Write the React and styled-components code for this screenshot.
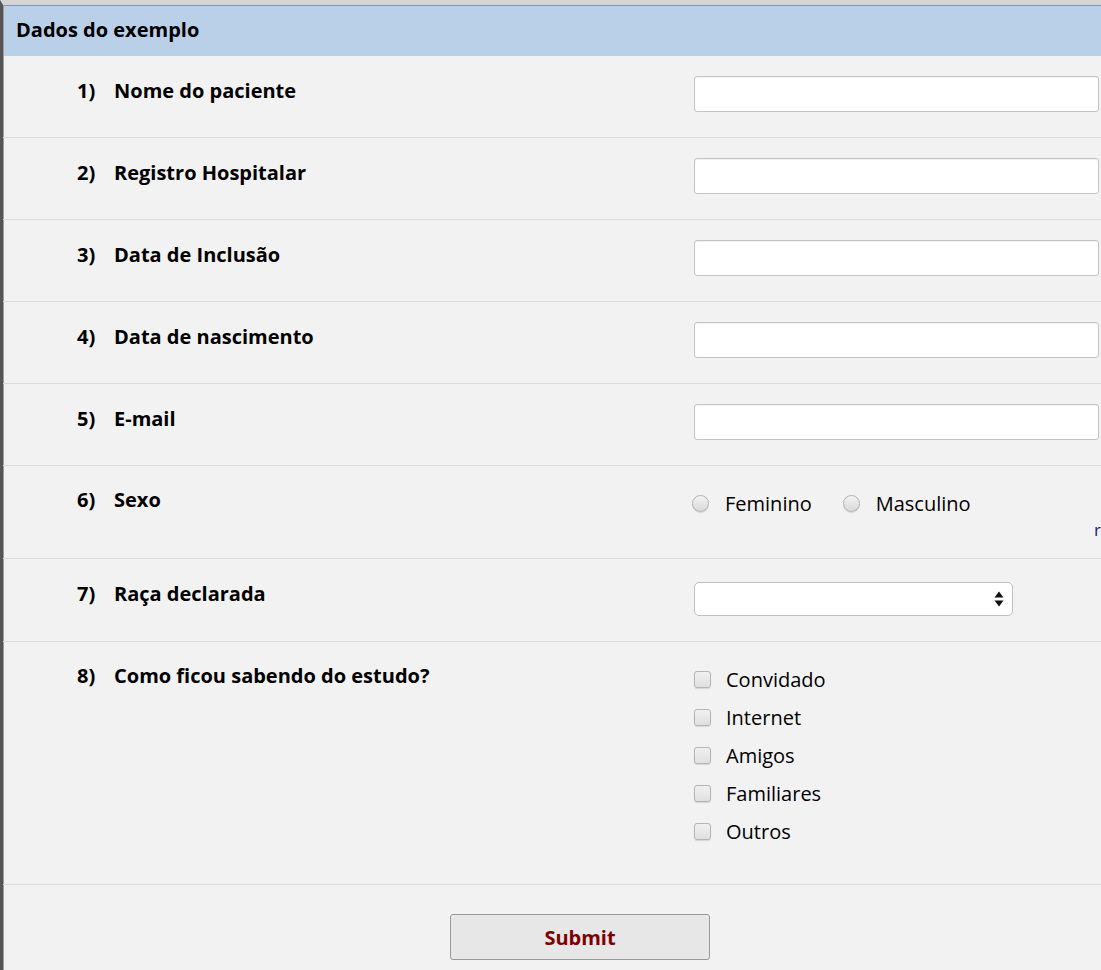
import React from 'react';
import styled, {createGlobalStyle} from 'styled-components';

const GlobalStyle = createGlobalStyle`
  html, body {
    margin: 0;
    padding: 0;
    overflow: hidden;
    background: #f2f2f2;
  }
  body {
    font-family: "Open Sans", "DejaVu Sans", sans-serif;
    color: #000;
  }
`;

const Frame = styled.div`
  width: 1150px;
  min-height: 970px;
  border-left: 3px solid #555;
  border-top: 5px solid #d4d4d4;
  background: #f2f2f2;
  box-shadow: inset 1px 0 0 #9a9a9a;
`;

const Header = styled.div`
  background: #bacfe8;
  border-top: 1px solid #7d97b8;
  height: 51px;
  box-sizing: border-box;
  padding: 0 0 3px 12px;
  display: flex;
  align-items: center;
  font-weight: 700;
  font-size: 20px;
  margin-left: 1px;
`;

const Row = styled.div`
  display: grid;
  grid-template-columns: 74px 37px 580px 1fr;
  border-bottom: 1px solid #dcdcdc;
  padding: ${p => p.$pad || '20px 0 25px'};
  min-height: ${p => p.$min || '36px'};
`;

const Num = styled.div`
  grid-column: 2;
  font-weight: 700;
  font-size: 20px;
  line-height: 24px;
  padding-top: ${p => p.$top || '3px'};
`;

const Label = styled(Num)`
  grid-column: 3;
`;

const Field = styled.div`
  grid-column: 4;
  display: flex;
  flex-direction: column;
`;

const TextInput = styled.input`
  width: 405px;
  height: 36px;
  box-sizing: border-box;
  border: 1px solid #c4c4c4;
  border-radius: 3px;
  background: #fff;
  box-shadow: inset 0 1px 1px rgba(0, 0, 0, 0.06);
  outline: none;
`;

const OptionLine = styled.div`
  display: flex;
  align-items: center;
  height: ${p => p.$h || '34px'};
  font-size: 20px;
`;

const Radio = styled.span`
  flex: none;
  width: 17px;
  height: 17px;
  border-radius: 50%;
  border: 1px solid #b2b2b2;
  box-sizing: border-box;
  background: linear-gradient(#f4f4f4, #d8d8d8);
  box-shadow: 0 1px 1px rgba(0, 0, 0, 0.12);
  margin: 0 16px 0 -2px;
`;

const RadioText = styled.span`
  margin-right: 33px;
`;

const Reset = styled.div`
  height: 20px;
  font-size: 17px;
  line-height: 20px;
  color: #1a237e;
  padding-left: 400px;
  white-space: nowrap;
`;

const SelectBox = styled.div`
  width: 319px;
  height: 34px;
  box-sizing: border-box;
  border: 1px solid #c0c0c0;
  border-radius: 5px;
  background: #fff;
  display: flex;
  justify-content: flex-end;
  align-items: center;
  padding-right: 8px;
  margin-top: 2px;
`;

const CheckBox = styled.span`
  flex: none;
  width: 17px;
  height: 17px;
  border-radius: 3px;
  border: 1px solid #b4b4b4;
  box-sizing: border-box;
  background: linear-gradient(#f0f0f0, #e0e0e0);
  box-shadow: 0 1px 1px rgba(0, 0, 0, 0.12);
  margin-right: 15px;
`;

const SubmitRow = styled.div`
  display: flex;
  justify-content: center;
  padding-top: 29px;
`;

const SubmitButton = styled.button`
  width: 260px;
  height: 46px;
  margin-left: 4px;
  border: 1px solid #999;
  border-radius: 3px;
  background: #e7e7e7;
  color: #800000;
  font-family: "Open Sans", "DejaVu Sans", sans-serif;
  font-weight: 700;
  font-size: 20px;
`;

const textFields = [
  'Nome do paciente',
  'Registro Hospitalar',
  'Data de Inclusão',
  'Data de nascimento',
  'E-mail',
];

const sources = ['Convidado', 'Internet', 'Amigos', 'Familiares', 'Outros'];

const Arrows = () => (
  <svg width="10" height="16" viewBox="0 0 10 16">
    <path d="M5 0.5 L9.5 6.5 H0.5 Z" fill="#111" />
    <path d="M5 15.5 L9.5 9.5 H0.5 Z" fill="#111" />
  </svg>
);

export default function App() {
  return (
    <>
      <GlobalStyle />
      <Frame>
        <Header>Dados do exemplo</Header>

        {textFields.map((name, i) => (
          <Row key={name}>
            <Num>{i + 1})</Num>
            <Label>{name}</Label>
            <Field>
              <TextInput type="text" />
            </Field>
          </Row>
        ))}

        <Row $pad="20px 0 18px" $min="54px">
          <Num $top="2px">6)</Num>
          <Label $top="2px">Sexo</Label>
          <Field>
            <OptionLine>
              <Radio />
              <RadioText>Feminino</RadioText>
              <Radio />
              <RadioText>Masculino</RadioText>
            </OptionLine>
            <Reset>reset</Reset>
          </Field>
        </Row>

        <Row $pad="21px 0 25px" $min="34px">
          <Num $top="2px">7)</Num>
          <Label $top="2px">Raça declarada</Label>
          <Field>
            <SelectBox>
              <Arrows />
            </SelectBox>
          </Field>
        </Row>

        <Row $pad="18px 0 34px" $min="190px">
          <Num $top="4px">8)</Num>
          <Label $top="4px">Como ficou sabendo do estudo?</Label>
          <Field>
            {sources.map(s => (
              <OptionLine key={s} $h="38px">
                <CheckBox />
                {s}
              </OptionLine>
            ))}
          </Field>
        </Row>

        <SubmitRow>
          <SubmitButton>Submit</SubmitButton>
        </SubmitRow>
      </Frame>
    </>
  );
}
